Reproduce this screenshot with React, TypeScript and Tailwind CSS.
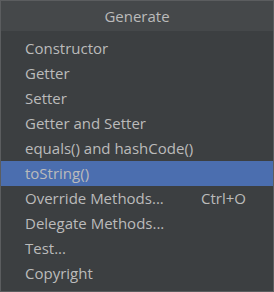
import React from 'react';

const ITEMS: { label: string; shortcut?: string }[] = [
    { label: 'Constructor' },
    { label: 'Getter' },
    { label: 'Setter' },
    { label: 'Getter and Setter' },
    { label: 'equals() and hashCode()' },
    { label: 'toString()' },
    { label: 'Override Methods...', shortcut: 'Ctrl+O' },
    { label: 'Delegate Methods...' },
    { label: 'Test...' },
    { label: 'Copyright' },
];

export default function App() {
    const selected = 'toString()';
    return (
        <div
            className="w-[274px] h-[292px] bg-[#3c3f41] border border-[#5b5d5f] flex flex-col text-[#bbbbbb]"
            style={{ fontFamily: '"Open Sans", "Noto Sans", sans-serif' }}
        >
            <div className="h-[30px] bg-[#45484a] flex items-center justify-center text-[15px] shrink-0">
                Generate
            </div>
            <ul className="pt-[5px]">
                {ITEMS.map((item) => (
                    <li
                        key={item.label}
                        className={`h-[25px] flex items-center pl-[24px] text-[15px] ${item.label === selected ? 'bg-[#4b6eaf]' : ''}`}
                    >
                        <span className="w-[176px]">{item.label}</span>
                        {item.shortcut && <span>{item.shortcut}</span>}
                    </li>
                ))}
            </ul>
        </div>
    );
}
